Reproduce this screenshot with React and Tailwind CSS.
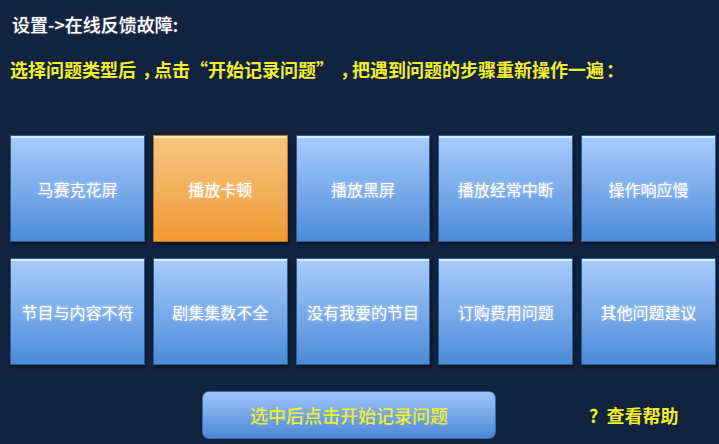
export default function App() {
  const items = [
    "马赛克花屏",
    "播放卡顿",
    "播放黑屏",
    "播放经常中断",
    "操作响应慢",
    "节目与内容不符",
    "剧集集数不全",
    "没有我要的节目",
    "订购费用问题",
    "其他问题建议",
  ];
  const font = { fontFamily: '"Noto Sans CJK SC", "Noto Sans", sans-serif' };
  return (
    <div
      lang="zh-CN"
      className="w-[719px] h-[444px] bg-[#12233f] overflow-hidden flex flex-col"
      style={font}
    >
      <div className="pl-[12px] pt-[14px] h-[34px] text-[18px] leading-[20px] font-medium text-white [text-shadow:0_0_2px_rgba(255,255,255,0.4)]">
        设置-&gt;在线反馈故障:
      </div>
      <div className="pl-[10px] mt-[25px] text-[18px] leading-[20px] font-bold text-[#f3ee2a] whitespace-nowrap">
        选择问题类型后
        <span className="ml-[6px] tracking-[-6px]">，</span>
        点击
        <span className="inline-block w-[18px] text-right">“</span>
        开始记录问题
        <span className="inline-block w-[18px] text-left">”</span>
        <span className="ml-[6px] tracking-[-6px]">，</span>
        把遇到问题的步骤重新操作一遍
        <span className="inline-block w-[22px] text-center">：</span>
      </div>
      <div className="mt-[56px] ml-[10px] w-[706px] grid grid-cols-5 gap-x-[8px] gap-y-[16px]">
        {items.map((t, i) =>
          i === 1 ? (
            <div
              key={i}
              className="h-[107px] flex items-center justify-center border border-[#b8752a] bg-gradient-to-b from-[#f6c680] to-[#f0992e] shadow-[inset_0_2px_0_#fde7a8,1px_2px_3px_rgba(0,0,0,0.5)] text-white text-[16px] font-normal [text-shadow:0_0_3px_rgba(255,255,255,0.6)]"
            >
              {t}
            </div>
          ) : (
            <div
              key={i}
              className="h-[107px] flex items-center justify-center border border-[#2f5d92] bg-gradient-to-b from-[#a9ccfc] to-[#4b8bd9] shadow-[inset_0_2px_0_#d6ebff,1px_2px_3px_rgba(0,0,0,0.5)] text-white text-[16px] font-normal [text-shadow:0_0_3px_rgba(255,255,255,0.6)]"
            >
              {t}
            </div>
          )
        )}
      </div>
      <div className="mt-[26px] flex items-center">
        <div className="ml-[202px] w-[294px] h-[48px] rounded-[7px] border border-[#3a6aa6] bg-gradient-to-b from-[#9fc5fb] to-[#4a88d6] flex items-center justify-center text-[18px] font-medium text-[#f3ee2a]">
          选中后点击开始记录问题
        </div>
        <div className="ml-[93px] text-[18px] font-bold text-[#f3ee2a] whitespace-pre">
          ?  查看帮助
        </div>
      </div>
    </div>
  );
}
